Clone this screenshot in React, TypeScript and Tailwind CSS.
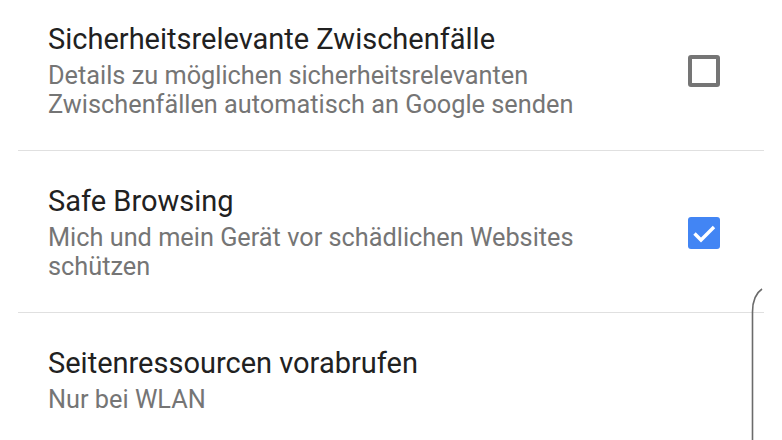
import React from "react";

function Unchecked() {
  return (
    <div className="w-[32px] h-[32px] shrink-0 rounded-[3px] border-[4px] border-[#757575] bg-white" />
  );
}

function Checked() {
  return (
    <div className="w-[32px] h-[32px] shrink-0 rounded-[3px] bg-[#4285f4] flex items-center justify-center">
      <svg width="32" height="32" viewBox="0 0 32 32">
        <path d="M6.5 16.5 L13 23 L26 10" fill="none" stroke="white" strokeWidth="3.4" strokeLinecap="butt" strokeLinejoin="miter" />
      </svg>
    </div>
  );
}

function Row({ title, subtitle, control, divider }: { title: string; subtitle: React.ReactNode; control?: React.ReactNode; divider?: boolean }) {
  return (
    <div className={divider ? "border-b border-[#e0e0e0]" : ""}>
      <div className="flex items-center pl-[30px] pr-[44px] pt-[33px] pb-[31px]">
        <div className="flex-1 min-w-0">
          <div className="text-[29px] leading-[34px] text-[#212121]">{title}</div>
          <div className="mt-[5px] text-[25.3px] leading-[29px] text-[#757575] whitespace-nowrap">{subtitle}</div>
        </div>
        {control}
      </div>
    </div>
  );
}

export default function App() {
  return (
    <div className="relative w-[782px] h-[440px] overflow-hidden bg-white" style={{ fontFamily: "Roboto, 'Noto Sans', sans-serif" }}>
      <div className="mx-[18px] -mt-[11px]">
        <Row
          title="Sicherheitsrelevante Zwischenfälle"
          subtitle={<>Details zu möglichen sicherheitsrelevanten<br />Zwischenfällen automatisch an Google senden</>}
          control={<Unchecked />}
          divider
        />
        <Row
          title="Safe Browsing"
          subtitle={<>Mich und mein Gerät vor schädlichen Websites<br />schützen</>}
          control={<Checked />}
          divider
        />
        <Row title="Seitenressourcen vorabrufen" subtitle="Nur bei WLAN" />
      </div>
      <svg className="absolute left-[745px] top-[284px]" width="37" height="156" viewBox="0 0 37 156">
        <path d="M7.5 156 L7.5 28 C7.5 16 11 9 17 5" fill="none" stroke="#6b6b6b" strokeWidth="1.6" />
      </svg>
    </div>
  );
}
